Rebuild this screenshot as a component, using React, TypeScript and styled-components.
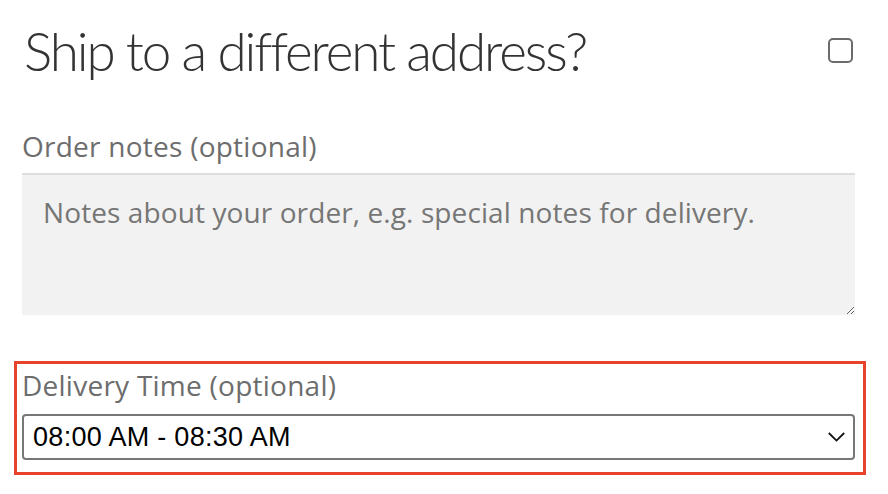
import React from "react";
import styled, { createGlobalStyle } from "styled-components";

const GlobalStyle = createGlobalStyle`
  html, body { margin: 0; padding: 0; background: #ffffff; }
  body { font-family: "Open Sans", Lato, sans-serif; }
`;

const Page = styled.div`
  width: 833px;
  padding: 0 33px 0 22px;
  display: flex;
  flex-direction: column;
`;

const HeaderRow = styled.div`
  display: flex;
  align-items: center;
  justify-content: space-between;
  height: 101px;
`;

const Heading = styled.h3`
  margin: 0 0 0 2px;
  font-family: Lato, sans-serif;
  font-weight: 300;
  font-size: 53px;
  line-height: 101px;
  color: #333333;
  letter-spacing: -2.1px;
`;

const Checkbox = styled.input`
  appearance: none;
  margin: 0 2px 0 0;
  width: 25px;
  height: 25px;
  box-sizing: border-box;
  border: 2px solid #6b6b6b;
  border-radius: 5px;
  background: #fff;
`;

const Field = styled.div`
  display: flex;
  flex-direction: column;
`;

const Label = styled.label`
  font-family: "Open Sans", sans-serif;
  font-size: 28px;
  line-height: 40px;
  letter-spacing: 0.25px;
  color: #6d6d6d;
`;

const NotesField = styled(Field)`
  margin-top: 25px;
  gap: 7px;
`;

const Notes = styled.textarea`
  box-sizing: border-box;
  width: 833px;
  height: 142px;
  margin: 0;
  border: none;
  border-top: 2px solid #dedede;
  background: #f2f2f2;
  padding: 18px 21px;
  font-family: "Open Sans", sans-serif;
  font-size: 28px;
  line-height: 39px;
  letter-spacing: 0.1px;
  color: #333;
  outline: none;
  resize: vertical;
  &::placeholder { color: #767676; }
`;

const Highlight = styled(Field)`
  margin: 46px -11px 0 -8px;
  border: 3px solid #e8432a;
  padding: 1px 8px 12px 5px;
  gap: 9px;
`;

const Select = styled.div`
  box-sizing: border-box;
  height: 46px;
  display: flex;
  align-items: center;
  justify-content: space-between;
  border: 2px solid #777777;
  border-radius: 4px;
  padding: 0 8px 0 9px;
  background: #fff;
  font-family: "Liberation Sans", Arial, sans-serif;
  font-size: 27px;
  letter-spacing: 0.3px;
  color: #000;
`;

const Chevron = () => (
  <svg width="17" height="10" viewBox="0 0 17 10" fill="none">
    <path d="M0.8 1 L8.5 8.6 L16.2 1" stroke="#111" strokeWidth="1.8" />
  </svg>
);

export default function App() {
  return (
    <>
      <GlobalStyle />
      <Page>
        <HeaderRow>
          <Heading>Ship to a different address?</Heading>
          <Checkbox type="checkbox" />
        </HeaderRow>
        <NotesField>
          <Label>Order notes (optional)</Label>
          <Notes placeholder="Notes about your order, e.g. special notes for delivery." />
        </NotesField>
        <Highlight>
          <Label>Delivery Time (optional)</Label>
          <Select role="combobox">
            <span>08:00 AM - 08:30 AM</span>
            <Chevron />
          </Select>
        </Highlight>
      </Page>
    </>
  );
}
